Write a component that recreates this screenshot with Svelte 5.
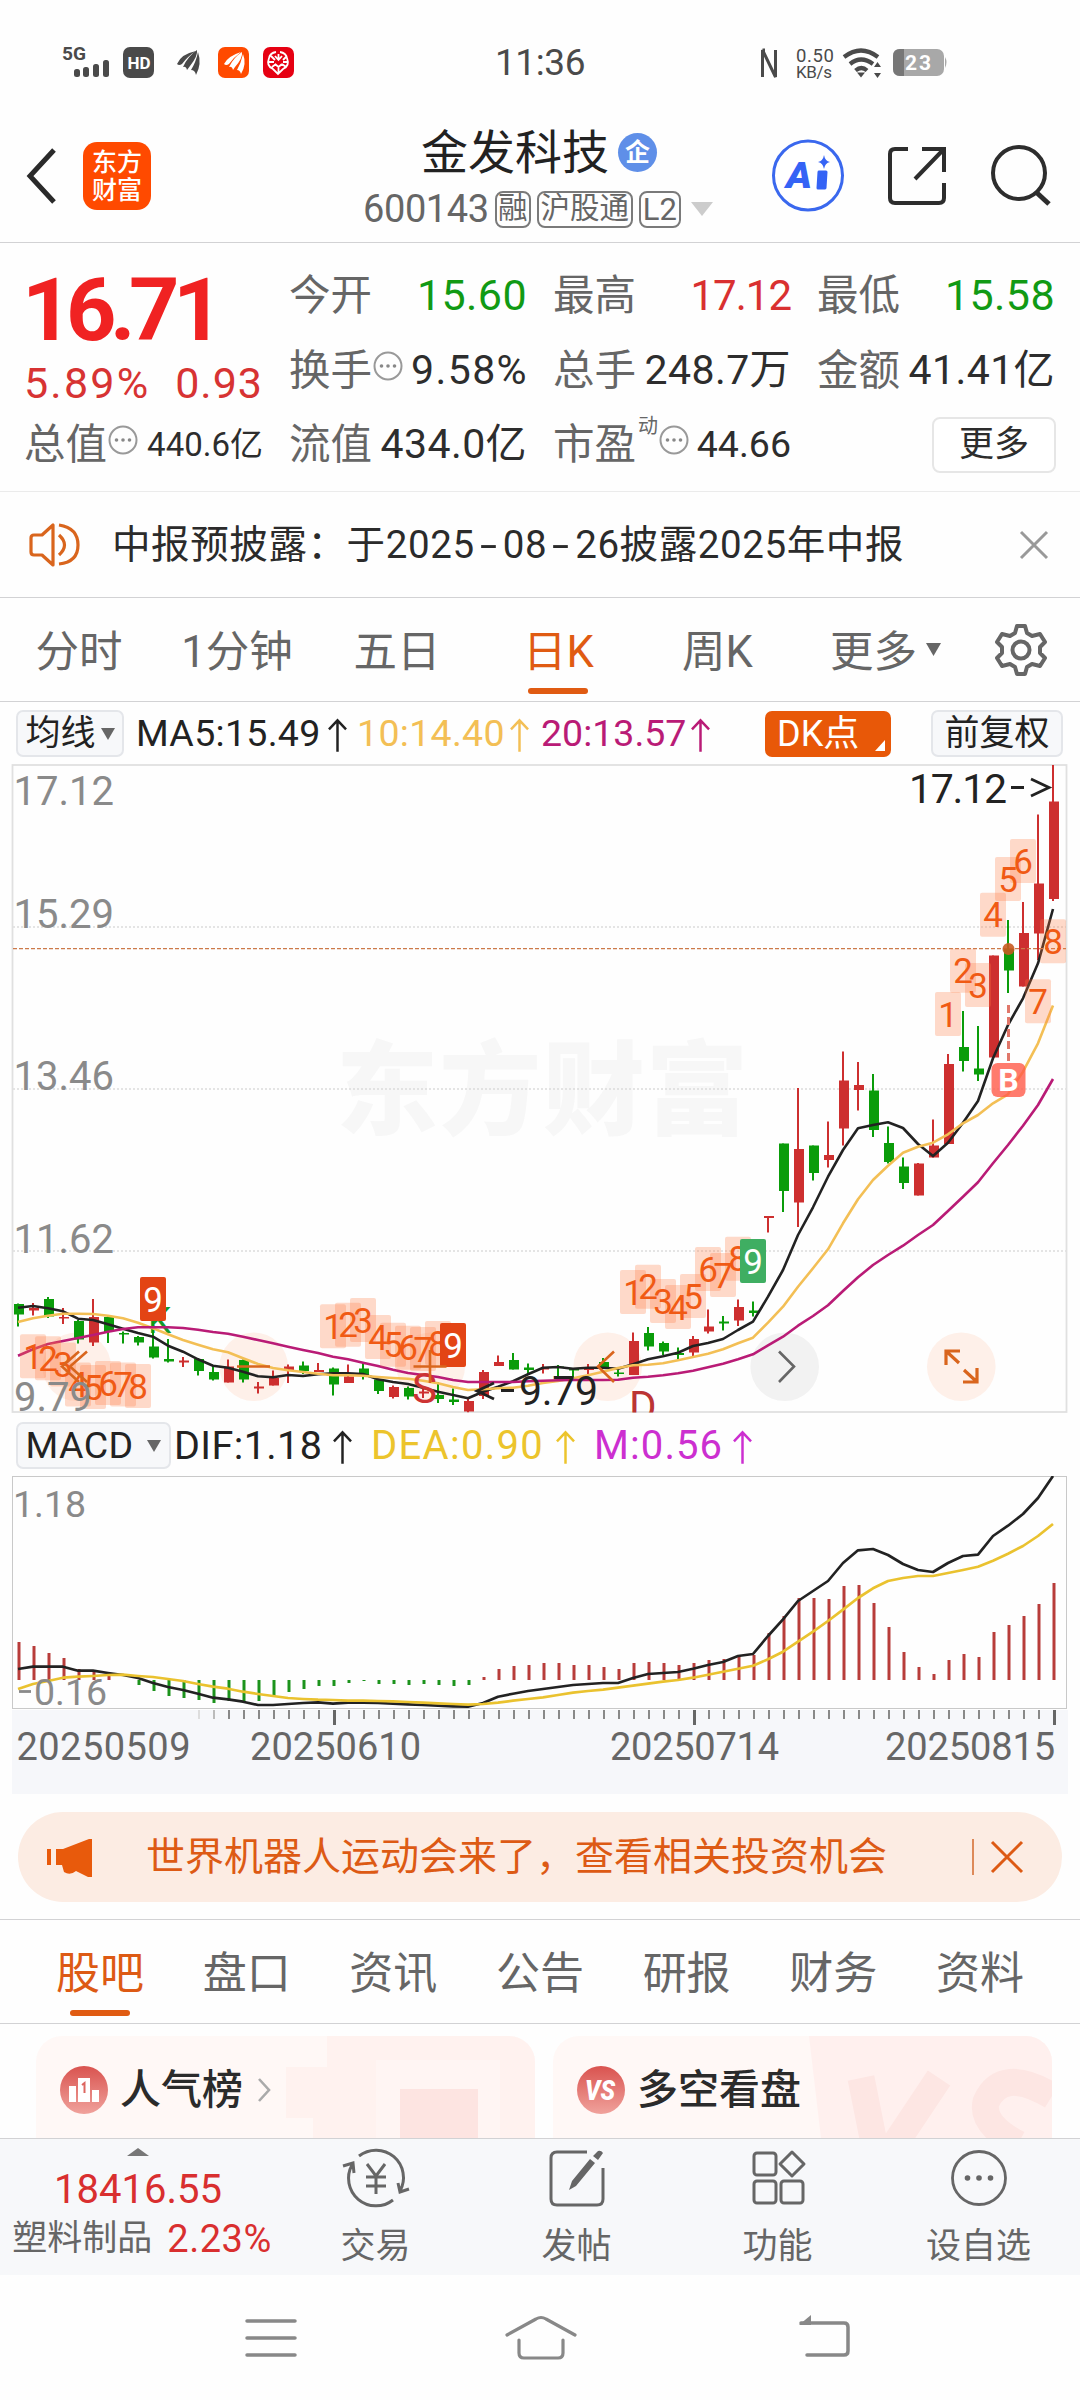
<script>
  // x position of the trading day with index i
  const px = (i) => 18 + 15 * i;
  const line = (ys) => ys.map((y, i) => `${px(i)},${y}`).join(' ');

  // [direction, high, body top, body bottom, low]
  const candles = [
    ['g', 1303.5, 1304, 1314.5, 1326.5], ['r', 1303, 1308, 1310.5, 1315.5], ['g', 1297, 1299, 1316.5, 1318],
    ['r', 1308, 1317, 1318.5, 1324], ['g', 1320, 1321, 1339.5, 1343.5], ['r', 1299, 1317, 1342.5, 1346],
    ['g', 1316, 1317, 1332, 1343], ['g', 1331.5, 1333, 1334.5, 1343.5], ['g', 1336, 1337, 1342.5, 1345.5],
    ['g', 1322, 1346.5, 1357.5, 1358.5], ['g', 1339, 1359, 1361.5, 1362.5], ['r', 1357, 1360.5, 1362.5, 1367],
    ['g', 1358, 1359, 1371, 1375.5], ['g', 1365.5, 1372, 1379.5, 1380.5], ['r', 1359.5, 1366.5, 1382.5, 1382.5],
    ['g', 1359.5, 1360, 1379.5, 1382.5], ['r', 1382, 1386.5, 1388.5, 1393.5], ['r', 1370.5, 1378, 1385.5, 1385.5],
    ['r', 1364.5, 1366.5, 1370, 1383], ['g', 1361.5, 1365.5, 1371, 1374], ['r', 1363, 1370, 1372, 1372],
    ['g', 1367.5, 1368.5, 1384.5, 1395.5], ['r', 1364.5, 1376.5, 1383, 1383], ['g', 1363, 1368.5, 1375.5, 1379.5],
    ['g', 1378.5, 1379.5, 1391, 1394], ['r', 1385.5, 1387, 1397, 1398.5], ['g', 1386.5, 1388, 1396.5, 1399.5],
    ['r', 1388, 1391.5, 1393.5, 1398], ['g', 1382, 1395, 1399, 1403], ['g', 1388.5, 1399.5, 1402, 1405],
    ['r', 1399, 1401, 1411.5, 1412.5], ['r', 1370, 1372, 1396, 1399], ['r', 1355.5, 1362, 1366, 1366],
    ['g', 1353, 1360, 1369.5, 1369.5], ['g', 1363.5, 1367.5, 1370, 1375], ['r', 1364, 1368, 1369.5, 1373.5],
    ['g', 1365, 1366.5, 1368, 1378.5], ['g', 1369, 1369, 1370.5, 1377.5], ['r', 1364, 1368, 1370, 1374],
    ['g', 1358, 1362, 1368, 1369], ['g', 1370, 1372.5, 1374, 1376.5], ['r', 1332.5, 1341, 1375, 1375],
    ['g', 1327, 1333, 1346.5, 1350.5], ['g', 1341.5, 1343, 1351.5, 1355], ['g', 1347.5, 1353, 1355, 1359],
    ['r', 1336, 1339, 1352.5, 1356], ['r', 1309.5, 1326.5, 1331.5, 1333.5], ['g', 1316, 1321.5, 1323.5, 1330.5],
    ['r', 1299.5, 1307, 1320.5, 1326], ['g', 1301.5, 1310.5, 1313, 1316.5], ['r', 1216, 1216, 1218, 1232.5],
    ['g', 1143.5, 1143.5, 1191, 1212], ['r', 1088, 1149, 1202.5, 1227], ['g', 1145.5, 1145.5, 1173, 1180.5],
    ['r', 1121.5, 1155, 1160, 1167.5], ['r', 1051.5, 1080.5, 1128.5, 1145.5], ['r', 1062, 1085, 1090, 1110.5],
    ['g', 1074, 1090.5, 1130, 1137], ['g', 1126.5, 1143, 1162, 1163.5], ['g', 1157.5, 1166.5, 1183, 1189],
    ['r', 1163, 1163.5, 1195.5, 1195.5], ['r', 1119.5, 1145.5, 1157.5, 1157.5], ['r', 1054, 1064, 1144, 1144],
    ['g', 1011, 1047, 1061, 1071.5], ['g', 1026, 1068.5, 1074.5, 1081], ['r', 955.5, 955.5, 1057.5, 1057.5],
    ['g', 920, 949, 970.5, 993], ['r', 902, 933, 986.5, 986.5], ['r', 814.5, 883.5, 933.5, 960],
    ['r', 765, 801.5, 899, 901]
  ];

  const ma5 = [1307.7,1306,1308.3,1311.3,1318.7,1320,1324.3,1328.7,1333,1336.7,1345.7,1351.7,1359.3,1365.7,1367.7,1371.7,1376.3,1377.3,1375,1376,1374.3,1373.3,1373.3,1374,1379.3,1382,1384,1387.7,1391.7,1395,1398.3,1391.7,1386.7,1381.3,1374.3,1367.7,1367,1368.7,1367.7,1367.7,1368.7,1364.3,1359.3,1356.3,1352.7,1346,1343,1339,1330,1321.7,1296.7,1270,1235,1207.3,1176.7,1150,1128.3,1125,1122.3,1128,1144,1156,1142.7,1122.7,1101,1058.3,1025,998.3,963.3,909];
  const ma10 = [1322,1318.3,1315.7,1313.7,1313.7,1314,1315.7,1318.3,1322.7,1328.3,1334.3,1340,1344.7,1349.3,1352.3,1358.3,1364,1368,1370.3,1372,1373.7,1375.3,1375.3,1375.7,1377,1378,1378.7,1380.7,1383.3,1387,1390,1389.3,1388.3,1387.7,1385.7,1383,1381,1378.3,1375.3,1371.7,1368,1365.3,1364.7,1363.3,1360.3,1357,1353.7,1349.3,1343.3,1337.7,1322.7,1306.7,1286.7,1268.3,1249.3,1223.3,1199.3,1180,1165.7,1152.7,1146.7,1142.7,1134.3,1123.3,1115,1103.3,1094.3,1071.7,1043.3,1005.5];
  const ma20 = [1355.7,1349.3,1344,1341,1338,1335,1331.7,1329,1327.3,1327.3,1327.3,1328,1329.7,1332,1333.7,1336.7,1340,1343.3,1346.7,1350,1353,1356.7,1359.3,1362.7,1366,1369.7,1373,1375,1377,1380,1382,1382,1382,1382,1381.3,1380.7,1380.3,1380,1380,1380,1379.7,1377.7,1376.7,1375.3,1373.3,1370.7,1367.3,1363.7,1359.3,1354.3,1345.3,1336.7,1325.7,1316,1305.3,1291,1277.3,1265,1255,1245.7,1235,1225,1211,1196.7,1182.3,1163.3,1145,1125.7,1105,1079];

  // count marks: first day index, then the top of each box
  const series = [
    [1, [1334.3, 1336.3, 1342.5, 1362.5, 1365, 1361, 1362.5, 1364]],
    [21, [1304.3, 1302.7, 1298, 1315, 1322.7, 1325.7, 1327, 1321]],
    [41, [1270, 1264.7, 1279, 1285, 1274, 1247, 1253, 1236.7]],
    [62, [992, 948.7, 963, 892.7, 857, 839, 979.3, 919.3]]
  ];
  const marks = series.flatMap(([s, tops]) => tops.map((top, k) => ({ x: px(s + k), top, n: k + 1 })));
  const nines = [[9, 1277, 'hot'], [29, 1323, 'hot'], [49, 1239, 'cool']];

  const macd = [1642,1646,1653,1658,1669,1670,1676,1680,1685,1691,1696,1698,1700,1703,1701,1702,1701,1697,1692,1689,1686,1686,1683,1681,1684,1684,1685,1684,1685,1686,1685,1677,1669,1666,1665,1663,1663,1665,1665,1667,1669,1663,1662,1663,1665,1663,1660,1659,1656,1655,1633,1616,1598,1598,1599,1586,1585,1603,1627,1652,1667,1674,1660,1654,1657,1632,1625,1616,1604,1583];
  const dif = [1669,1666.7,1666.7,1666.7,1670.7,1670.7,1673,1675,1678,1683,1687,1690,1693.7,1697.7,1699.3,1701.7,1705,1705,1704,1703,1702.3,1703.7,1702.7,1702.7,1703,1703.7,1704.3,1705,1705.7,1706.3,1706.7,1703,1696.7,1693.7,1691,1689,1687,1685,1684,1683,1683,1678,1674,1673,1672,1668.7,1665,1662,1656,1654,1636,1619.3,1601,1591,1581,1563,1550.3,1549,1555,1564,1570,1572,1563,1556,1554.7,1536,1525.7,1514,1498,1476];
  const dea = [1689,1684,1681,1677.7,1676.7,1676,1675,1674.7,1676,1677,1679,1681,1684,1686.7,1688.7,1691.7,1694,1696,1698,1699,1699.7,1700,1700.7,1700.7,1701,1701.3,1702,1702.7,1703.3,1704,1704.7,1704,1702.7,1700.7,1699,1697.3,1695,1692.7,1691,1689.7,1687.7,1685.7,1683.7,1681.7,1680,1677.7,1674.7,1671.7,1668.7,1665.7,1659.3,1651.7,1641.7,1631.7,1621,1609.7,1598,1588.3,1581,1578,1576,1576,1573,1570,1566.7,1560.7,1553.7,1546,1536,1524];
  const ticks = Array.from({ length: 58 }, (_, k) => k + 12);
  const majorTicks = [21, 45, 69];

  const tabs = ['股吧', '盘口', '资讯', '公告', '研报', '财务', '资料'];
</script>

{#snippet dots()}
  <svg class="dots" viewBox="0 0 30 30"><circle cx="15" cy="15" r="13.5" fill="none" stroke="#999" stroke-width="2" /><g fill="#888"><circle cx="8.5" cy="15" r="1.8" /><circle cx="15" cy="15" r="1.8" /><circle cx="21.5" cy="15" r="1.8" /></g></svg>
{/snippet}

{#snippet up()}
  <svg class="up" viewBox="0 0 20 36"><path d="M10 35V2M1 11.500L10 2l9 9.500" fill="none" stroke="currentColor" stroke-width="2.600" /></svg>
{/snippet}

<div class="page">
  <div class="status">
    <svg class="st-left" viewBox="0 0 260 40" width="260" height="40">
      <text x="1" y="18" class="b" font-size="18.500" textLength="24" lengthAdjust="spacingAndGlyphs" fill="#4a4a4a">5G</text>
      <g fill="#4a4a4a"><rect x="13" y="27" width="6" height="8" rx="2.500" /><rect x="22" y="25" width="6" height="10" rx="2.500" /><rect x="32" y="22" width="6" height="13" rx="2.500" /><rect x="42" y="18" width="6" height="17" rx="2.500" />
      <rect x="62" y="5" width="31" height="31" rx="7" /></g>
      <text x="66.500" y="27" class="b" font-size="17" textLength="23" fill="#fff">HD</text>
      <g fill="#4a4a4a"><path d="M116 22Q120 12 135 9Q127 14 121 22Q118 24 116 22Z" /><path d="M122 25Q127 14 136 8Q137 14 129 24L126 28Q125 24 122 25Z" /><path d="M130 28Q135 20 137 10Q141 22 135 33Q134 28 130 28Z" /></g>
      <rect x="157" y="5" width="31" height="31" rx="7" fill="#ff4a00" />
      <g fill="#fff"><path d="M163 22Q167 14 180 10Q173 15 168 22Q165 24 163 22Z" /><path d="M168 25Q173 15 181 10Q182 16 174 25L172 28Q171 24 168 25Z" /><path d="M176 28Q180 21 182 12Q186 22 180 32Q179 28 176 28Z" /></g>
      <rect x="202" y="5" width="31" height="31" rx="7" fill="#e60012" />
      <g fill="none" stroke="#fff" stroke-width="1.800"><path d="M215 10q-6 1-7 6-3 8 4 11l5 5 5-5q7-3 4-11-1-5-7-6M210 14l4 4m12-4l-4 4M208 20h5m14 0h-5M211 25l4-3m10 3l-4-3M217.500 12v5m0 9v5M214 14l3.500 4 3.500-4M214 22l3.500 3 3.500-3" /></g>
    </svg>
    <span class="clock">11:36</span>
    <svg class="st-right" viewBox="0 0 200 40" width="200" height="40">
      <path d="M3.500 35V8L16.500 35V8M3.500 8h2.500" fill="none" stroke="#4a4a4a" stroke-width="3" />
      <text x="37" y="20" font-size="18.500" textLength="38" fill="#4a4a4a">0.50</text>
      <text x="37" y="36" font-size="17" textLength="36" fill="#4a4a4a">KB/s</text>
      <g fill="none" stroke="#4a4a4a" stroke-width="4.200"><path d="M85 15q17-13 34 0M91 22q11-9 23 0M96.500 28.500q6-5 11.500 0" /></g>
      <path d="M98 30.500h8l-4 5zM115 25l3.500-5 3.500 5zm0 6l3.500 5 3.500-5z" fill="#4a4a4a" />
      <rect x="134" y="7" width="51" height="27" rx="7" fill="#a8a8a8" /><path d="M141 7h4v27h-4q-7 0-7-7v-13q0-7 7-7z" fill="#777" /><path d="M186 15q3 5 0 11z" fill="#a8a8a8" />
      <text x="146" y="28" class="b" font-size="21" textLength="26" fill="#fff">23</text>
    </svg>
  </div>

  <header>
    <svg class="back" viewBox="0 0 32 56"><path d="M28 2L4 28l24 26" fill="none" stroke="#2a2a2a" stroke-width="5" /></svg>
    <div class="logo"><span>东方</span><span>财富</span></div>
    <div class="title">
      <div class="name">金发科技<i>企</i></div>
      <div class="code"><span class="num">600143</span><b>融</b><b>沪股通</b><b class="lv">L2</b><svg width="22" height="14" viewBox="0 0 22 14"><path d="M0 0h22L11 14z" fill="#ccc" /></svg></div>
    </div>
    <svg class="actions" viewBox="0 0 290 80">
      <circle cx="38" cy="39.500" r="34.500" fill="#fff" stroke="#3a68ee" stroke-width="3" />
      <text x="16" y="52" class="ai" font-size="36" textLength="26" lengthAdjust="spacingAndGlyphs" fill="#3563f5">A</text>
      <path d="M49 36h7l-1 16h-7z" fill="#3563f5" stroke="#3563f5" stroke-width="3" stroke-linejoin="round" /><path d="M54 19q1 6 6 7-5 1-6 7-1-6-6-7 5-1 6-7z" fill="#3563f5" />
      <g fill="none" stroke="#2d2d2d" stroke-width="4"><path d="M138 13h-13q-5 0-5 5v44q0 5 5 5h44q5 0 5-5V47M152 13h22v23M174 13L145 43" /><circle cx="249" cy="37" r="26" /><path d="M266 56l13 12" stroke-width="5" /></g>
    </svg>
  </header>

  <section class="quote">
    <div class="col first">
      <div class="price">16.71</div>
      <div class="change"><span>5.89%</span><span>0.93</span></div>
      <div class="cell"><label>总值</label>{@render dots()}<span class="v small">440.6亿</span></div>
    </div>
    <div class="col">
      <div class="cell"><label>今开</label><span class="v green">15.60</span></div>
      <div class="cell"><label>换手</label>{@render dots()}<span class="v wide">9.58%</span></div>
      <div class="cell"><label>流值</label><span class="v">434.0亿</span></div>
    </div>
    <div class="col">
      <div class="cell"><label>最高</label><span class="v red">17.12</span></div>
      <div class="cell"><label>总手</label><span class="v">248.7万</span></div>
      <div class="cell"><label>市盈</label><sup>动</sup>{@render dots()}<span class="v mid">44.66</span></div>
    </div>
    <div class="col">
      <div class="cell"><label>最低</label><span class="v green">15.58</span></div>
      <div class="cell"><label>金额</label><span class="v">41.41亿</span></div>
      <div class="cell"><button class="more">更多</button></div>
    </div>
  </section>

  <section class="notice">
    <svg width="52" height="44" viewBox="0 0 52 44"><g fill="none" stroke="#d9651d" stroke-width="3.200" stroke-linejoin="round"><path d="M24 2v40L13 32H5q-3 0-3-3V15q0-3 3-3h8zM30 12q11 10 0 20M30 2q19 3 19 20T30 41" /></g></svg>
    <span>中报预披露：于2025<em>-</em>08<em>-</em>26披露2025年中报</span>
    <svg class="x" width="30" height="30" viewBox="0 0 30 30"><path d="M2 2l26 26M28 2L2 28" stroke="#999" stroke-width="3" /></svg>
  </section>

  <nav class="periods">
    <span>分时</span><span>1分钟</span><span>五日</span><span class="on">日K</span><span>周K</span>
    <span>更多<svg width="15" height="13" viewBox="0 0 15 13"><path d="M0 0h15L7.500 13z" fill="#666" /></svg></span>
    <span><svg width="54" height="54" viewBox="0 0 54 54"><g fill="none" stroke="#666" stroke-width="4" stroke-linejoin="round"><path d="M23 3h8l2 7 5 3 8-2 5 8-5 5v6l5 5-5 8-8-2-5 3-2 7h-8l-2-7-5-3-8 2-5-8 5-5v-6l-5-5 5-8 8 2 5-3z" /><circle cx="27" cy="27" r="8.500" /></g></svg></span>
  </nav>

  <div class="indicators">
    <span class="pill avg">均线<svg width="14" height="12" viewBox="0 0 14 12"><path d="M0 0h14L7 12z" fill="#666" /></svg></span>
    <span class="ind k1">MA5:15.49{@render up()}</span>
    <span class="ind k2">10:14.40{@render up()}</span>
    <span class="ind k3">20:13.57{@render up()}</span>
    <span class="dk">DK点<svg width="10" height="11" viewBox="0 0 10 11"><path d="M10 0v11H0z" fill="#fff" /></svg></span>
    <span class="pill adj">前复权</span>
  </div>

  <svg class="chart" viewBox="0 764 1080 650" width="1080" height="650">
    <defs><clipPath id="plot"><rect x="12" y="764" width="1055" height="648.500" /></clipPath></defs>
    <text x="336" y="1127" class="mark" font-size="102" textLength="412" fill="#f7f7f7">东方财富</text>
    <g stroke="#dcdcdc" stroke-width="1.500" stroke-dasharray="2 2"><path d="M13 927H1066M13 1089H1066M13 1251H1066" /></g>
    <rect x="12.500" y="765" width="1054" height="647" fill="none" stroke="#e0e0e0" stroke-width="1.800" />
    <g fill="#fef0e9"><circle cx="76.700" cy="1366.700" r="34.300" /><circle cx="253.700" cy="1366.700" r="34.300" /><circle cx="430.700" cy="1366.700" r="34.300" /><circle cx="607.700" cy="1366.700" r="34.300" /><circle cx="961.300" cy="1366.700" r="34.300" /></g>
    <circle cx="784.700" cy="1366.700" r="34.300" fill="#f2f2f2" />
    <g clip-path="url(#plot)">
      <text x="148" y="1333" font-size="37" fill="#12992a">K</text>
      {#each candles as [dir, hi, top, bot, lo], i}
        <g class={dir}><rect x={px(i) - 1} y={hi} width="2" height={lo - hi} /><rect x={px(i) - 4} y={top} width="10" height={bot - top} /></g>
      {/each}
      <g fill="none" stroke-width="2.600" stroke-linejoin="round">
        <polyline points={line(ma5)} stroke="#222" />
        <polyline points={line(ma10)} stroke="#f3bf55" />
        <polyline points={line(ma20)} stroke="#b91b76" />
      </g>
      <text x="412" y="1402.500" font-size="42" fill="#cd3333">S</text>
      <text x="629" y="1421" font-size="42" fill="#bb3434">D</text>
    </g>
    <path d="M13 948.700H1066" stroke="#cc7a4a" stroke-width="1.300" stroke-dasharray="4 2" />
    {#each marks as m}
      <rect x={m.x - 13} y={m.top} width="26" height="44" rx="2" fill="#ff7a40" fill-opacity=".28" />
    {/each}
    {#each marks as m}
      <text x={m.x} y={m.top + 34.500} class="mid-text" font-size="35" fill="#f05a14">{m.n}</text>
    {/each}
    {#each nines as [i, top, tone]}
      <rect x={px(i) - 13} y={top} width="26" height="44" rx="2" class={tone} />
      <text x={px(i)} y={top + 34.500} class="mid-text" font-size="35" fill="#fff">9</text>
    {/each}
    <path d="M1008.500 1005v57" stroke="#e0776a" stroke-width="3" stroke-dasharray="8 4" />
    <circle cx="1008.500" cy="949" r="6" fill="#c85a20" fill-opacity=".9" />
    <rect x="991.500" y="1063" width="34" height="34" rx="6" fill="#ff5a48" fill-opacity=".8" />
    <text x="1008.500" y="1091" class="mid-text b" font-size="32" fill="#fff">B</text>
    <g fill="none" stroke="#d9651d" stroke-width="2.600">
      <path d="M79 1351.500l-17 15 17 15.500M87 1351.500l-17 15 17 15.500M237 1366.500h33M413.500 1366.500h33M430 1350v33M614 1351.500l-16 15 16 15.500" />
      <path d="M946 1365v-14h14M946 1351l13 12M963 1382h14v-14M977 1382l-13-12" stroke-width="3.200" />
    </g>
    <path d="M779 1351.500l15 15-15 15.500" fill="none" stroke="#666" stroke-width="2.600" />
    <g font-size="40" fill="#8a8a8a">
      <text x="13.500" y="805">17.12</text><text x="13.500" y="928">15.29</text><text x="13.500" y="1090">13.46</text><text x="13.500" y="1252.500">11.62</text><text x="14" y="1411">9.79</text>
    </g>
    <g font-size="41" fill="#222">
      <text x="909" y="803" textLength="98">17.12</text><path d="M1011 787.500h13M1031 779l18 8.500-18 8.500M494 1383l-17 8 17 8M501 1390.500h13" fill="none" stroke="#222" stroke-width="2.800" />
      <text x="519" y="1405" textLength="79">9.79</text>
    </g>
  </svg>

  <div class="indicators second">
    <span class="pill macd">MACD<svg width="14" height="12" viewBox="0 0 14 12"><path d="M0 0h14L7 12z" fill="#666" /></svg></span>
    <span class="ind m1">DIF:1.18{@render up()}</span>
    <span class="ind m2">DEA:0.90{@render up()}</span>
    <span class="ind m3">M:0.56{@render up()}</span>
  </div>

  <svg class="chart" viewBox="0 1476 1080 318" width="1080" height="318">
    <rect x="12" y="1710" width="1056" height="84" fill="#f6f7fa" />
    <rect x="12.500" y="1476.500" width="1054" height="232" fill="none" stroke="#c9c9c9" />
    {#each macd as v, i}
      <rect x={px(i) - 0.5} y={Math.min(v, 1680)} width="3" height={Math.abs(v - 1680)} fill={v < 1680 ? '#b83c3a' : '#1c931c'} />
    {/each}
    <g fill="none" stroke-width="2.700" stroke-linejoin="round">
      <polyline points={line(dif)} stroke="#222" /><polyline points={line(dea)} stroke="#eac22f" />
    </g>
    <g font-size="37.500" fill="#8a8a8a"><text x="13" y="1516.500">1.18</text><path d="M19 1691.500h12" stroke="#8a8a8a" stroke-width="2.800" /><text x="34" y="1705">0.16</text></g>
    {#each ticks as t}
      <rect x={px(t)} y="1710" width="2" height="9" fill={t === 12 ? '#ddd' : t === 13 ? '#bbb' : '#888'} />
    {/each}
    {#each majorTicks as t}<rect x={px(t)} y="1710" width="3" height="15" fill="#666" />{/each}
    <g font-size="38" fill="#666">
      <text x="16.500" y="1759.500" textLength="174">20250509</text><text x="250" y="1759.500" textLength="171">20250610</text><text x="610" y="1759.500" textLength="169">20250714</text><text x="885" y="1759.500" textLength="170">20250815</text>
    </g>
  </svg>

  <div class="banner">
    <svg width="46" height="40" viewBox="0 0 46 40"><path d="M0 12h4v16H0zM9 12h7L42 2h3v38h-4l-12-6q-6 5-12 1l-2-7H9z" fill="#e85a0c" /></svg>
    <span>世界机器人运动会来了，查看相关投资机会</span>
    <i></i>
    <svg class="x" width="34" height="34" viewBox="0 0 34 34"><path d="M2 2l30 30M32 2L2 32" stroke="#dd5a14" stroke-width="3" /></svg>
  </div>

  <nav class="tabs">
    {#each tabs as t, i}<span class:on={i === 0}>{t}</span>{/each}
  </nav>

  <section class="cards">
    <div class="card">
      <svg class="art" viewBox="0 0 499 102" width="499" height="102"><path d="M243 31h48V0h208v102H277V82H250V31z" fill="#fff0ee" fill-opacity=".8" /><path d="M340 24h124v78H340z" fill="#fff5f3" /><path d="M364 53h78v49h-78z" fill="#fde4e1" /></svg>
      <svg class="ic" width="48" height="48" viewBox="0 0 48 48"><defs><linearGradient id="rg" x1="0" y1="0" x2="0" y2="1"><stop offset="0" stop-color="#d9534f" /><stop offset="1" stop-color="#f0a29c" /></linearGradient></defs><circle cx="24" cy="24" r="24" fill="url(#rg)" /><path d="M9 20h7v16H9zM18 12h12v24H18zM32 24h7v12h-7z" fill="#fff" /><path d="M22 19l2.500-2v10" fill="none" stroke="#dd6660" stroke-width="2" /></svg>
      <b>人气榜</b>
      <svg class="go" width="14" height="24" viewBox="0 0 14 24"><path d="M2 1l10 11L2 23" fill="none" stroke="#aaa" stroke-width="2.600" /></svg>
    </div>
    <div class="card">
      <svg class="art" viewBox="0 0 499 102" width="499" height="102"><path d="M256 0h243v102H268z" fill="#fff0ee" /><g fill="none" stroke="#fde6e3" stroke-width="27"><path d="M308 42l18 90L386 42M499 60q-50-30-66 6-5 22 32 42" /></g></svg>
      <svg class="ic" width="48" height="48" viewBox="0 0 48 48"><circle cx="24" cy="24" r="24" fill="url(#rg)" /><text x="8" y="34" class="vs" font-size="27" textLength="30" lengthAdjust="spacingAndGlyphs" fill="#fff">VS</text></svg>
      <b>多空看盘</b>
    </div>
  </section>

  <footer>
    <div class="sector">
      <svg width="22" height="8" viewBox="0 0 22 8"><path d="M0 8h22L11 0z" fill="#777" /></svg>
      <span class="idx">18416.55</span>
      <span class="sec">塑料制品<em>2.23%</em></span>
    </div>
    <div class="act">
      <svg width="68" height="60" viewBox="0 0 68 60"><g fill="none" stroke="#666" stroke-width="3"><path d="M17 8A27.500 27.500 0 0 1 58 43M51 52A27.500 27.500 0 0 1 10 17M1 18l10-3 1 10M67 41l-9 3-2-9M25 16l9 12 9-12M24 29h20M24 38h20M34 28v18" /></g></svg>
      <span>交易</span>
    </div>
    <div class="act">
      <svg width="68" height="60" viewBox="0 0 68 60"><g fill="none" stroke="#666" stroke-width="3"><path d="M44 4H14q-6 0-6 6v41q0 6 6 6h40q6 0 6-6V20" /></g><path d="M47 11l5 4-19 23-7 4 3-9zM50 8l5-5q3-1 5 2l-5 7z" fill="#666" /></svg>
      <span>发帖</span>
    </div>
    <div class="act">
      <svg width="68" height="60" viewBox="0 0 68 60"><g fill="none" stroke="#666" stroke-width="3" stroke-linejoin="round"><rect x="10" y="5" width="22" height="22" rx="3" /><rect x="10" y="33" width="22" height="22" rx="3" /><rect x="37" y="33" width="22" height="22" rx="3" /><path d="M48 4l12 12-12 12-12-12z" /></g></svg>
      <span>功能</span>
    </div>
    <div class="act">
      <svg width="68" height="60" viewBox="0 0 68 60"><circle cx="34" cy="30" r="26.500" fill="none" stroke="#666" stroke-width="2.800" /><g fill="#666"><circle cx="22.500" cy="30" r="2.800" /><circle cx="34" cy="30" r="2.800" /><circle cx="45.500" cy="30" r="2.800" /></g></svg>
      <span>设自选</span>
    </div>
  </footer>

  <div class="sysnav">
    <svg width="52" height="46" viewBox="0 0 52 46"><path d="M2 6h48M2 23h48M2 40h48" stroke="#888" stroke-width="3.500" stroke-linecap="round" /></svg>
    <svg width="72" height="46" viewBox="0 0 72 46"><path d="M2 20L31 4q5-3 10 0l29 16M14 25v13q0 5 5 5h34q5 0 5-5V25" fill="none" stroke="#888" stroke-width="3.200" stroke-linecap="round" /></svg>
    <svg width="54" height="46" viewBox="0 0 54 46"><path d="M14 0v10H2z" fill="#888" /><path d="M4 8h43q4 0 4 4v24q0 4-4 4H10" fill="none" stroke="#888" stroke-width="3.500" stroke-linecap="round" /></svg>
  </div>
</div>

<style>
  :global(body) { background: #fff; }
  .page { width: 1080px; height: 2400px; overflow: hidden; background: #fefefe; color: #2b2b2b; font-family: Roboto, 'Noto Sans CJK SC', sans-serif; line-height: 1; display: flex; flex-direction: column; }
  .page > * { flex-shrink: 0; box-sizing: border-box; }
  svg { display: block; flex: none; }
  i, em { font-style: normal; }
  .b { font-weight: 700; }

  .status { height: 110px; padding: 14px 121px 0 61px; display: grid; grid-template-columns: 260px 1fr 200px; align-items: center; }
  .clock { font-size: 37px; color: #4a4a4a; justify-self: center; letter-spacing: -.4px; }

  header { height: 133px; border-bottom: 1px solid #d2d2d4; display: flex; align-items: center; padding-left: 26px; }
  .back { width: 32px; height: 56px; }
  .logo { margin-left: 25px; width: 68px; height: 68px; border-radius: 14px; background: #ff4a00; color: #fff; font-size: 25px; font-weight: 500; display: flex; flex-direction: column; align-items: center; justify-content: center; gap: 3px; }
  .title { margin-left: 212px; width: 352px; height: 118px; display: flex; flex-direction: column; gap: 9px; padding-top: 7px; box-sizing: border-box; }
  .name { display: flex; align-items: center; justify-content: center; gap: 9px; font-size: 47px; height: 56px; padding-left: 0; color: #222; }
  .name i { width: 39px; height: 39px; border-radius: 50%; background: #5f8fe8; color: #fff; font-size: 25px; font-weight: 700; display: flex; align-items: center; justify-content: center; }
  .code { display: flex; align-items: center; gap: 6px; color: #666; height: 40px; white-space: nowrap; }
  .num { font-size: 38px; letter-spacing: -.4px; }
  .code b { flex: none; font-weight: 400; font-size: 29.500px; height: 37px; width: 36px; border: 2px solid #7a7a7a; border-radius: 8px; box-sizing: border-box; display: flex; align-items: center; justify-content: center; }
  .code b:nth-of-type(2) { width: 96px; }
  .code .lv { width: 42px; font-size: 31px; }
  .code svg { margin-left: 4px; }
  .actions { width: 290px; height: 80px; margin-left: 55px; }
  .ai { font-weight: 900; font-style: italic; }

  .quote { height: 249px; padding: 15px 25px 0; display: grid; grid-template-columns: repeat(4, 238px); column-gap: 26px; border-bottom: 1px solid #ebebeb; }
  .cell { height: 74.500px; padding-top: 1px; box-sizing: border-box; display: flex; align-items: center; font-size: 41.500px; color: #666; white-space: nowrap; }
  .v { margin-left: auto; font-size: 41px; color: #2d2d2d; letter-spacing: .4px; }
  .v.wide { letter-spacing: 1.400px; margin-right: -1px; }
  .v.small { font-size: 33px; letter-spacing: 0; }
  .v.mid { font-size: 37.500px; letter-spacing: 0; }
  .v.green { color: #119a14; font-size: 43px; }
  .v.red { color: #d93030; font-size: 42px; letter-spacing: -1px; }
  .dots { width: 30px; height: 30px; margin: -9px 0 0 1px; }
  sup { font-size: 20px; align-self: flex-start; margin: 8px -4px 0 2px; line-height: 1; }
  sup + .dots { margin-left: 5px; }
  .first { margin-left: -1px; }
  .price { height: 102px; font-size: 88px; font-weight: 700; color: #f02222; letter-spacing: -6.500px; line-height: 104px; margin-left: -2px; }
  .change { height: 47px; display: flex; justify-content: space-between; align-items: center; color: #d73333; font-size: 43px; letter-spacing: 2.200px; }
  .change span:last-child { letter-spacing: 1px; }
  .more { margin-left: auto; margin-right: -1px; width: 124px; height: 56px; border: 2px solid #e6e6e6; border-radius: 8px; background: #fff; font: inherit; font-size: 35px; line-height: 1; color: #2d2d2d; padding: 0; }

  .notice { height: 106px; border-bottom: 1px solid #d2d2d4; display: flex; align-items: center; padding: 0 31px 0 29px; font-size: 38.500px; }
  .notice span { margin: 1px 0 0 31px; letter-spacing: .6px; white-space: nowrap; }
  .notice em { display: inline-block; width: 28px; text-align: center; transform: scaleX(1.6); }
  .x { margin-left: auto; }

  .periods { height: 104px; border-bottom: 1px solid #d2d2d4; display: grid; grid-template-columns: 158px 158px 162px 161px 157px 179px 91px; align-items: center; justify-items: center; font-size: 43.500px; color: #666; }
  .periods span { display: flex; align-items: center; height: 100%; padding-top: 6px; box-sizing: border-box; position: relative; white-space: nowrap; }
  .periods span svg { margin-left: 9px; margin-top: -6px; }
  .periods span:last-child { padding-top: 0; }
  .periods span:last-child svg { margin: 0; }
  .on { color: #e05b12; }
  .on::after { content: ''; position: absolute; left: 50%; margin-left: -30px; width: 60px; height: 6px; border-radius: 3px; background: #e05b12; bottom: 7px; }

  .indicators { height: 62px; padding-top: 1px; display: flex; align-items: center; font-size: 37.500px; padding-left: 16px; white-space: nowrap; }
  .pill { box-sizing: border-box; height: 47px; border: 2px solid #e4e6ea; border-radius: 7px; background: #f7f8fa; display: flex; align-items: center; justify-content: center; font-size: 35px; color: #222; }
  .avg { width: 108px; gap: 5px; }
  .adj { width: 132px; }
  .macd { width: 155px; font-size: 37.500px; gap: 14px; letter-spacing: .4px; }
  .ind { display: flex; align-items: center; justify-content: space-between; }
  .up { width: 19px; height: 35px; margin-top: 3px; }
  .k1 { width: 211px; margin-left: 12px; color: #222; letter-spacing: .3px; }
  .k2 { width: 172px; margin-left: 10px; color: #f3bf55; letter-spacing: .3px; }
  .k3 { width: 169px; margin-left: 12px; color: #b91b76; }
  .dk { width: 126px; height: 46px; box-sizing: border-box; margin: 0 40px 0 55px; border-radius: 7px; background: #e85808; color: #fff; font-size: 36px; display: flex; align-items: center; justify-content: space-between; padding: 0 6px 0 12px; }
  .dk svg { align-self: flex-end; margin-bottom: 6px; }
  .m1 { width: 178px; margin-left: 3px; color: #222; font-size: 39.500px; letter-spacing: .4px; }
  .m2 { width: 204px; margin-left: 19px; color: #ecc42c; font-size: 40px; letter-spacing: 1.300px; }
  .m3 { width: 158px; margin-left: 19px; color: #cc2fd0; font-size: 40px; letter-spacing: 1.100px; }

  .mid-text { text-anchor: middle; }
  .mark { font-weight: 900; }
  .g { fill: #0a9c0a; }
  .r { fill: #cd2f2f; }
  .hot { fill: #e34414; }
  .cool { fill: #3fae62; }

  .banner { margin: 18px 18px 17px; height: 90px; border-radius: 45px; background: #fcece3; color: #dd5a14; display: flex; align-items: center; padding: 0 38px 0 29px; font-size: 39px; white-space: nowrap; }
  .banner span { margin: 1px 0 0 53px; }
  .banner i { width: 2px; height: 36px; background: #dd8a5a; margin-left: auto; margin-right: 16px; }
  .banner .x { margin-left: 0; }

  .tabs { height: 105px; border-top: 1px solid #d2d2d4; border-bottom: 1px solid #d2d2d4; display: flex; justify-content: space-between; padding: 0 56px; font-size: 44px; color: #666; }
  .tabs span { display: flex; align-items: center; height: 100%; position: relative; padding-top: 5px; box-sizing: border-box; }
  .tabs .on { color: #dd5a14; }

  .cards { height: 114px; padding: 12px 28px 0 36px; display: flex; gap: 18px; }
  .card { position: relative; width: 499px; height: 102px; box-sizing: border-box; border-radius: 26px 26px 0 0; overflow: hidden; background: #fff8f6; display: flex; align-items: center; padding: 5px 0 0 24px; font-size: 41px; color: #2b2b2b; }
  .card b { font-weight: 500; margin: 2px 14px 0 12px; position: relative; }
  .card .ic, .card .go { position: relative; }
  .card .art { position: absolute; left: 0; top: 0; }
  .vs { font-weight: 900; font-style: italic; }

  footer { height: 137px; background: #f7f8fa; border-top: 1px solid #d2d2d4; display: flex; color: #666; font-size: 35px; }
  .sector { width: 276px; display: flex; flex-direction: column; align-items: center; padding-top: 9px; box-sizing: border-box; }
  .idx { color: #d92f2f; font-size: 40px; margin-top: 10px; line-height: 48px; }
  .sec { display: flex; align-items: center; gap: 15px; line-height: 48px; margin-top: 1px; margin-left: 8px; white-space: nowrap; }
  .sec em { color: #d92f2f; font-size: 38px; letter-spacing: .5px; }
  .act { width: 201px; display: flex; flex-direction: column; align-items: center; padding-top: 9px; margin-left: -1px; margin-right: 1px; }
  .act span { margin-top: 21px; }

  .sysnav { height: 125px; display: flex; align-items: center; padding-left: 245px; }
  .sysnav svg:nth-child(2) { margin-left: 208px; }
  .sysnav svg:nth-child(3) { margin-left: 220px; }
</style>
